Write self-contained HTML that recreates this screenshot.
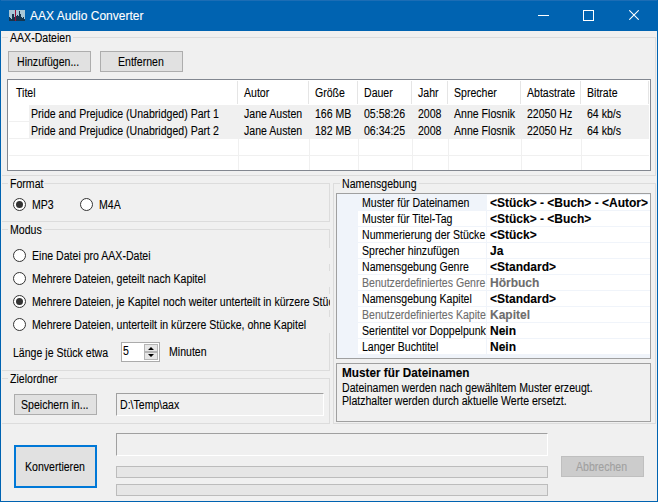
<!DOCTYPE html><html><head><meta charset="utf-8"><style>
html,body{margin:0;padding:0;width:658px;height:502px;overflow:hidden;background:#F0F0F0}
body>*,div>*{position:absolute}
div,svg,span{position:absolute}
.t{-webkit-text-stroke:0.1px currentColor;white-space:nowrap;font-family:"Liberation Sans",sans-serif;color:#000;transform-origin:0 0}
</style></head><body>
<div style="left:0px;top:0px;width:658px;height:31px;background:#0063B1"></div>
<div style="left:0px;top:0px;width:658px;height:1px;background:#1C6DB5"></div>
<div style="left:0px;top:0px;width:1px;height:502px;background:#0063B1"></div>
<div style="left:657px;top:0px;width:1px;height:502px;background:#0063B1"></div>
<div style="left:0px;top:501px;width:658px;height:1px;background:#0063B1"></div>
<svg style="left:9px;top:10px" width="16" height="11" viewBox="0 0 16 11"><rect width="16" height="11" fill="#A8C6D6"/><rect x="0" y="7" width="1" height="4" fill="#15354F"/><rect x="1" y="8" width="1" height="3" fill="#15354F"/><rect x="2" y="9" width="1" height="2" fill="#15354F"/><rect x="3" y="4" width="1" height="7" fill="#15354F"/><rect x="4" y="4" width="1" height="7" fill="#15354F"/><rect x="5" y="7" width="1" height="4" fill="#15354F"/><rect x="7" y="6" width="1" height="5" fill="#15354F"/><rect x="8" y="5" width="1" height="6" fill="#15354F"/><rect x="9" y="6" width="1" height="5" fill="#15354F"/><rect x="10" y="1" width="1" height="10" fill="#15354F"/><rect x="11" y="4" width="1" height="7" fill="#15354F"/><rect x="12" y="7" width="1" height="4" fill="#15354F"/><rect x="13" y="8" width="1" height="3" fill="#15354F"/><rect x="14" y="7" width="1" height="4" fill="#15354F"/><rect x="15" y="9" width="1" height="2" fill="#15354F"/><rect x="6" y="0" width="1" height="11" fill="#9A1038"/></svg>
<span class="t" style="left:30px;top:10px;font-size:12px;line-height:12px;transform:scaleX(1.0);color:#fff">AAX Audio Converter</span>
<div style="left:538px;top:15px;width:11px;height:1px;background:#fff"></div>
<div style="left:583px;top:10px;width:11px;height:11px;border:1px solid #fff;box-sizing:border-box"></div>
<svg style="left:629px;top:10px" width="10" height="10" viewBox="0 0 10 10"><path d="M0.3 0.3 L9.7 9.7 M9.7 0.3 L0.3 9.7" stroke="#fff" stroke-width="1.05"/></svg>
<div style="left:2px;top:37px;width:654px;height:1px;background:#DCDCDC"></div>
<div style="left:2px;top:175px;width:654px;height:1px;background:#DCDCDC"></div>
<div style="left:655px;top:37px;width:1px;height:139px;background:#DCDCDC"></div>
<div style="left:8px;top:36px;width:65px;height:3px;background:#F0F0F0"></div>
<span class="t" style="left:10px;top:32px;font-size:12px;line-height:12px;transform:scaleX(0.88);">AAX-Dateien</span>
<div style="left:8px;top:51px;width:83px;height:21px;background:#E1E1E1;border:1px solid #ADADAD;box-sizing:border-box"></div>
<span class="t" style="left:17px;top:56px;font-size:12px;line-height:12px;transform:scaleX(0.88);">Hinzufügen...</span>
<div style="left:100px;top:51px;width:83px;height:21px;background:#E1E1E1;border:1px solid #ADADAD;box-sizing:border-box"></div>
<span class="t" style="left:118px;top:56px;font-size:12px;line-height:12px;transform:scaleX(0.88);">Entfernen</span>
<div style="left:7px;top:79px;width:644px;height:92px;background:#fff;border:1px solid #828790;box-sizing:border-box"></div>
<div style="left:237px;top:81px;width:1px;height:23px;background:#E5E5E5"></div>
<div style="left:308px;top:81px;width:1px;height:23px;background:#E5E5E5"></div>
<div style="left:357px;top:81px;width:1px;height:23px;background:#E5E5E5"></div>
<div style="left:411px;top:81px;width:1px;height:23px;background:#E5E5E5"></div>
<div style="left:447px;top:81px;width:1px;height:23px;background:#E5E5E5"></div>
<div style="left:520px;top:81px;width:1px;height:23px;background:#E5E5E5"></div>
<div style="left:580px;top:81px;width:1px;height:23px;background:#E5E5E5"></div>
<div style="left:648px;top:81px;width:1px;height:23px;background:#E5E5E5"></div>
<span class="t" style="left:16px;top:87px;font-size:12px;line-height:12px;transform:scaleX(0.88);">Titel</span>
<span class="t" style="left:244px;top:87px;font-size:12px;line-height:12px;transform:scaleX(0.88);">Autor</span>
<span class="t" style="left:315px;top:87px;font-size:12px;line-height:12px;transform:scaleX(0.88);">Größe</span>
<span class="t" style="left:364px;top:87px;font-size:12px;line-height:12px;transform:scaleX(0.88);">Dauer</span>
<span class="t" style="left:418px;top:87px;font-size:12px;line-height:12px;transform:scaleX(0.88);">Jahr</span>
<span class="t" style="left:454px;top:87px;font-size:12px;line-height:12px;transform:scaleX(0.88);">Sprecher</span>
<span class="t" style="left:527px;top:87px;font-size:12px;line-height:12px;transform:scaleX(0.88);">Abtastrate</span>
<span class="t" style="left:587px;top:87px;font-size:12px;line-height:12px;transform:scaleX(0.88);">Bitrate</span>
<div style="left:29px;top:105px;width:620px;height:33px;background:#F0F0F0"></div>
<div style="left:9px;top:121px;width:640px;height:1px;background:#F0F0F0"></div>
<div style="left:9px;top:138px;width:640px;height:1px;background:#F0F0F0"></div>
<div style="left:9px;top:155px;width:640px;height:1px;background:#F0F0F0"></div>
<div style="left:238px;top:139px;width:1px;height:31px;background:#F0F0F0"></div>
<div style="left:309px;top:139px;width:1px;height:31px;background:#F0F0F0"></div>
<div style="left:358px;top:139px;width:1px;height:31px;background:#F0F0F0"></div>
<div style="left:412px;top:139px;width:1px;height:31px;background:#F0F0F0"></div>
<div style="left:448px;top:139px;width:1px;height:31px;background:#F0F0F0"></div>
<div style="left:521px;top:139px;width:1px;height:31px;background:#F0F0F0"></div>
<div style="left:581px;top:139px;width:1px;height:31px;background:#F0F0F0"></div>
<span class="t" style="left:31px;top:108px;font-size:12px;line-height:12px;transform:scaleX(0.88);">Pride and Prejudice (Unabridged) Part 1</span>
<span class="t" style="left:244px;top:108px;font-size:12px;line-height:12px;transform:scaleX(0.88);">Jane Austen</span>
<span class="t" style="left:315px;top:108px;font-size:12px;line-height:12px;transform:scaleX(0.88);">166 MB</span>
<span class="t" style="left:364px;top:108px;font-size:12px;line-height:12px;transform:scaleX(0.88);">05:58:26</span>
<span class="t" style="left:418px;top:108px;font-size:12px;line-height:12px;transform:scaleX(0.88);">2008</span>
<span class="t" style="left:454px;top:108px;font-size:12px;line-height:12px;transform:scaleX(0.88);">Anne Flosnik</span>
<span class="t" style="left:527px;top:108px;font-size:12px;line-height:12px;transform:scaleX(0.88);">22050 Hz</span>
<span class="t" style="left:587px;top:108px;font-size:12px;line-height:12px;transform:scaleX(0.88);">64 kb/s</span>
<span class="t" style="left:31px;top:125px;font-size:12px;line-height:12px;transform:scaleX(0.88);">Pride and Prejudice (Unabridged) Part 2</span>
<span class="t" style="left:244px;top:125px;font-size:12px;line-height:12px;transform:scaleX(0.88);">Jane Austen</span>
<span class="t" style="left:315px;top:125px;font-size:12px;line-height:12px;transform:scaleX(0.88);">182 MB</span>
<span class="t" style="left:364px;top:125px;font-size:12px;line-height:12px;transform:scaleX(0.88);">06:34:25</span>
<span class="t" style="left:418px;top:125px;font-size:12px;line-height:12px;transform:scaleX(0.88);">2008</span>
<span class="t" style="left:454px;top:125px;font-size:12px;line-height:12px;transform:scaleX(0.88);">Anne Flosnik</span>
<span class="t" style="left:527px;top:125px;font-size:12px;line-height:12px;transform:scaleX(0.88);">22050 Hz</span>
<span class="t" style="left:587px;top:125px;font-size:12px;line-height:12px;transform:scaleX(0.88);">64 kb/s</span>
<div style="left:2px;top:183px;width:328px;height:1px;background:#DCDCDC"></div>
<div style="left:2px;top:221px;width:328px;height:1px;background:#DCDCDC"></div>
<div style="left:329px;top:183px;width:1px;height:39px;background:#DCDCDC"></div>
<div style="left:8px;top:182px;width:36px;height:3px;background:#F0F0F0"></div>
<span class="t" style="left:10px;top:178px;font-size:12px;line-height:12px;transform:scaleX(0.88);">Format</span>
<svg style="left:13px;top:198px" width="13" height="13" viewBox="0 0 13 13"><circle cx="6.5" cy="6.5" r="6" fill="#fff" stroke="#333" stroke-width="1"/><circle cx="6.5" cy="6.5" r="3.5" fill="#333"/></svg>
<span class="t" style="left:32px;top:199px;font-size:12px;line-height:12px;transform:scaleX(0.88);">MP3</span>
<svg style="left:80px;top:198px" width="13" height="13" viewBox="0 0 13 13"><circle cx="6.5" cy="6.5" r="6" fill="#fff" stroke="#333" stroke-width="1"/></svg>
<span class="t" style="left:99px;top:199px;font-size:12px;line-height:12px;transform:scaleX(0.88);">M4A</span>
<div style="left:2px;top:229px;width:328px;height:1px;background:#DCDCDC"></div>
<div style="left:2px;top:370px;width:328px;height:1px;background:#DCDCDC"></div>
<div style="left:329px;top:229px;width:1px;height:142px;background:#DCDCDC"></div>
<div style="left:8px;top:228px;width:36px;height:3px;background:#F0F0F0"></div>
<span class="t" style="left:10px;top:224px;font-size:12px;line-height:12px;transform:scaleX(0.88);">Modus</span>
<div style="left:13px;top:248px;width:317px;height:16px;overflow:hidden;background:#F0F0F0">
<span class="t" style="left:19px;top:2px;font-size:12px;line-height:12px;transform:scaleX(0.88)">Eine Datei pro AAX-Datei</span></div>
<svg style="left:13px;top:249px" width="13" height="13" viewBox="0 0 13 13"><circle cx="6.5" cy="6.5" r="6" fill="#fff" stroke="#333" stroke-width="1"/></svg>
<div style="left:13px;top:271px;width:317px;height:16px;overflow:hidden;background:#F0F0F0">
<span class="t" style="left:19px;top:2px;font-size:12px;line-height:12px;transform:scaleX(0.88)">Mehrere Dateien, geteilt nach Kapitel</span></div>
<svg style="left:13px;top:272px" width="13" height="13" viewBox="0 0 13 13"><circle cx="6.5" cy="6.5" r="6" fill="#fff" stroke="#333" stroke-width="1"/></svg>
<div style="left:13px;top:294px;width:317px;height:16px;overflow:hidden;background:#F0F0F0">
<span class="t" style="left:19px;top:2px;font-size:12px;line-height:12px;transform:scaleX(0.88)">Mehrere Dateien, je Kapitel noch weiter unterteilt in kürzere Stücke</span></div>
<svg style="left:13px;top:295px" width="13" height="13" viewBox="0 0 13 13"><circle cx="6.5" cy="6.5" r="6" fill="#fff" stroke="#333" stroke-width="1"/><circle cx="6.5" cy="6.5" r="3.5" fill="#333"/></svg>
<div style="left:13px;top:317px;width:317px;height:16px;overflow:hidden;background:#F0F0F0">
<span class="t" style="left:19px;top:2px;font-size:12px;line-height:12px;transform:scaleX(0.88)">Mehrere Dateien, unterteilt in kürzere Stücke, ohne Kapitel</span></div>
<svg style="left:13px;top:318px" width="13" height="13" viewBox="0 0 13 13"><circle cx="6.5" cy="6.5" r="6" fill="#fff" stroke="#333" stroke-width="1"/></svg>
<span class="t" style="left:13px;top:347px;font-size:12px;line-height:12px;transform:scaleX(0.88);">Länge je Stück etwa</span>
<div style="left:121px;top:342px;width:39px;height:20px;background:#fff;border:1px solid #ABABAB;box-sizing:border-box"></div>
<span class="t" style="left:123px;top:345px;font-size:12px;line-height:12px;transform:scaleX(0.88);">5</span>
<div style="left:144px;top:344px;width:14px;height:8px;background:#E6E6E6;border:1px solid #B5B5B5;box-sizing:border-box"></div>
<div style="left:144px;top:352px;width:14px;height:8px;background:#E6E6E6;border:1px solid #B5B5B5;box-sizing:border-box"></div>
<svg style="left:147px;top:345px" width="8" height="14" viewBox="0 0 8 14"><path d="M1 5 L4 2 L7 5 Z M1 9 L7 9 L4 12 Z" fill="#000"/></svg>
<span class="t" style="left:169px;top:346px;font-size:12px;line-height:12px;transform:scaleX(0.88);">Minuten</span>
<div style="left:2px;top:378px;width:328px;height:1px;background:#DCDCDC"></div>
<div style="left:2px;top:423px;width:328px;height:1px;background:#DCDCDC"></div>
<div style="left:329px;top:378px;width:1px;height:46px;background:#DCDCDC"></div>
<div style="left:8px;top:377px;width:51px;height:3px;background:#F0F0F0"></div>
<span class="t" style="left:10px;top:373px;font-size:12px;line-height:12px;transform:scaleX(0.88);">Zielordner</span>
<div style="left:14px;top:394px;width:83px;height:21px;background:#E1E1E1;border:1px solid #ADADAD;box-sizing:border-box"></div>
<span class="t" style="left:21px;top:399px;font-size:12px;line-height:12px;transform:scaleX(0.88);">Speichern in...</span>
<div style="left:116px;top:393px;width:208px;height:23px;background:#F0F0F0;border-top:1px solid #A0A0A0;border-left:1px solid #A0A0A0;border-right:1px solid #FFFFFF;border-bottom:1px solid #FFFFFF;box-sizing:border-box"></div>
<span class="t" style="left:120px;top:399px;font-size:12px;line-height:12px;transform:scaleX(0.88);">D:\Temp\aax</span>
<div style="left:333px;top:183px;width:323px;height:1px;background:#DCDCDC"></div>
<div style="left:333px;top:423px;width:323px;height:1px;background:#DCDCDC"></div>
<div style="left:655px;top:183px;width:1px;height:241px;background:#DCDCDC"></div>
<div style="left:333px;top:183px;width:1px;height:241px;background:#DCDCDC"></div>
<div style="left:340px;top:182px;width:79px;height:3px;background:#F0F0F0"></div>
<span class="t" style="left:342px;top:178px;font-size:12px;line-height:12px;transform:scaleX(0.88);">Namensgebung</span>
<div style="left:336px;top:193px;width:315px;height:166px;background:#F0F4FA;border:1px solid #A0A0A0;box-sizing:border-box"></div>
<div style="left:487px;top:195px;width:163px;height:15px;background:#fff"></div>
<div style="left:362px;top:194px;width:124px;height:16px;overflow:hidden">
<span class="t" style="left:0;top:3px;font-size:12px;line-height:12px;transform:scaleX(0.88);">Muster für Dateinamen</span></div>
<div style="left:490px;top:194px;width:159px;height:16px;overflow:hidden">
<span class="t" style="left:0;top:3px;font-size:12px;line-height:12px;font-weight:bold;transform:scaleX(1.0);">&lt;Stück&gt; - &lt;Buch&gt; - &lt;Autor&gt;</span></div>
<div style="left:358px;top:211px;width:128px;height:15px;background:#fff"></div>
<div style="left:487px;top:211px;width:163px;height:15px;background:#fff"></div>
<div style="left:362px;top:210px;width:124px;height:16px;overflow:hidden">
<span class="t" style="left:0;top:3px;font-size:12px;line-height:12px;transform:scaleX(0.88);">Muster für Titel-Tag</span></div>
<div style="left:490px;top:210px;width:159px;height:16px;overflow:hidden">
<span class="t" style="left:0;top:3px;font-size:12px;line-height:12px;font-weight:bold;transform:scaleX(1.0);">&lt;Stück&gt; - &lt;Buch&gt;</span></div>
<div style="left:358px;top:227px;width:128px;height:15px;background:#fff"></div>
<div style="left:487px;top:227px;width:163px;height:15px;background:#fff"></div>
<div style="left:362px;top:226px;width:124px;height:16px;overflow:hidden">
<span class="t" style="left:0;top:3px;font-size:12px;line-height:12px;transform:scaleX(0.88);">Nummerierung der Stücke</span></div>
<div style="left:490px;top:226px;width:159px;height:16px;overflow:hidden">
<span class="t" style="left:0;top:3px;font-size:12px;line-height:12px;font-weight:bold;transform:scaleX(1.0);">&lt;Stück&gt;</span></div>
<div style="left:358px;top:243px;width:128px;height:15px;background:#fff"></div>
<div style="left:487px;top:243px;width:163px;height:15px;background:#fff"></div>
<div style="left:362px;top:242px;width:124px;height:16px;overflow:hidden">
<span class="t" style="left:0;top:3px;font-size:12px;line-height:12px;transform:scaleX(0.88);">Sprecher hinzufügen</span></div>
<div style="left:490px;top:242px;width:159px;height:16px;overflow:hidden">
<span class="t" style="left:0;top:3px;font-size:12px;line-height:12px;font-weight:bold;transform:scaleX(1.0);">Ja</span></div>
<div style="left:358px;top:259px;width:128px;height:15px;background:#fff"></div>
<div style="left:487px;top:259px;width:163px;height:15px;background:#fff"></div>
<div style="left:362px;top:258px;width:124px;height:16px;overflow:hidden">
<span class="t" style="left:0;top:3px;font-size:12px;line-height:12px;transform:scaleX(0.88);">Namensgebung Genre</span></div>
<div style="left:490px;top:258px;width:159px;height:16px;overflow:hidden">
<span class="t" style="left:0;top:3px;font-size:12px;line-height:12px;font-weight:bold;transform:scaleX(1.0);">&lt;Standard&gt;</span></div>
<div style="left:358px;top:275px;width:128px;height:15px;background:#fff"></div>
<div style="left:487px;top:275px;width:163px;height:15px;background:#fff"></div>
<div style="left:362px;top:274px;width:124px;height:16px;overflow:hidden">
<span class="t" style="left:0;top:3px;font-size:12px;line-height:12px;transform:scaleX(0.88);color:#6D6D6D">Benutzerdefiniertes Genre</span></div>
<div style="left:490px;top:274px;width:159px;height:16px;overflow:hidden">
<span class="t" style="left:0;top:3px;font-size:12px;line-height:12px;font-weight:bold;transform:scaleX(1.0);color:#6D6D6D">Hörbuch</span></div>
<div style="left:358px;top:291px;width:128px;height:15px;background:#fff"></div>
<div style="left:487px;top:291px;width:163px;height:15px;background:#fff"></div>
<div style="left:362px;top:290px;width:124px;height:16px;overflow:hidden">
<span class="t" style="left:0;top:3px;font-size:12px;line-height:12px;transform:scaleX(0.88);">Namensgebung Kapitel</span></div>
<div style="left:490px;top:290px;width:159px;height:16px;overflow:hidden">
<span class="t" style="left:0;top:3px;font-size:12px;line-height:12px;font-weight:bold;transform:scaleX(1.0);">&lt;Standard&gt;</span></div>
<div style="left:358px;top:307px;width:128px;height:15px;background:#fff"></div>
<div style="left:487px;top:307px;width:163px;height:15px;background:#fff"></div>
<div style="left:362px;top:306px;width:124px;height:16px;overflow:hidden">
<span class="t" style="left:0;top:3px;font-size:12px;line-height:12px;transform:scaleX(0.88);color:#6D6D6D">Benutzerdefiniertes Kapitel</span></div>
<div style="left:490px;top:306px;width:159px;height:16px;overflow:hidden">
<span class="t" style="left:0;top:3px;font-size:12px;line-height:12px;font-weight:bold;transform:scaleX(1.0);color:#6D6D6D">Kapitel</span></div>
<div style="left:358px;top:323px;width:128px;height:15px;background:#fff"></div>
<div style="left:487px;top:323px;width:163px;height:15px;background:#fff"></div>
<div style="left:362px;top:322px;width:124px;height:16px;overflow:hidden">
<span class="t" style="left:0;top:3px;font-size:12px;line-height:12px;transform:scaleX(0.88);">Serientitel vor Doppelpunkt</span></div>
<div style="left:490px;top:322px;width:159px;height:16px;overflow:hidden">
<span class="t" style="left:0;top:3px;font-size:12px;line-height:12px;font-weight:bold;transform:scaleX(1.0);">Nein</span></div>
<div style="left:358px;top:339px;width:128px;height:15px;background:#fff"></div>
<div style="left:487px;top:339px;width:163px;height:15px;background:#fff"></div>
<div style="left:362px;top:338px;width:124px;height:16px;overflow:hidden">
<span class="t" style="left:0;top:3px;font-size:12px;line-height:12px;transform:scaleX(0.88);">Langer Buchtitel</span></div>
<div style="left:490px;top:338px;width:159px;height:16px;overflow:hidden">
<span class="t" style="left:0;top:3px;font-size:12px;line-height:12px;font-weight:bold;transform:scaleX(1.0);">Nein</span></div>
<div style="left:336px;top:363px;width:315px;height:59px;background:#F0F0F0;border:1px solid #A0A0A0;box-sizing:border-box"></div>
<span class="t" style="left:342px;top:367px;font-size:12px;line-height:12px;transform:scaleX(0.98);font-weight:bold">Muster für Dateinamen</span>
<span class="t" style="left:342px;top:382px;font-size:12px;line-height:12px;transform:scaleX(0.88);">Dateinamen werden nach gewähltem Muster erzeugt.</span>
<span class="t" style="left:342px;top:395px;font-size:12px;line-height:12px;transform:scaleX(0.88);">Platzhalter werden durch aktuelle Werte ersetzt.</span>
<div style="left:14px;top:445px;width:83px;height:43px;background:#E1E1E1;border:2px solid #0078D7;box-sizing:border-box"></div>
<span class="t" style="left:25px;top:461px;font-size:12px;line-height:12px;transform:scaleX(0.88);">Konvertieren</span>
<div style="left:116px;top:433px;width:432px;height:23px;background:#F0F0F0;border-top:1px solid #A0A0A0;border-left:1px solid #A0A0A0;border-right:1px solid #FFFFFF;border-bottom:1px solid #FFFFFF;box-sizing:border-box"></div>
<div style="left:116px;top:466px;width:432px;height:12px;background:#E6E6E6;border:1px solid #BCBCBC;box-sizing:border-box"></div>
<div style="left:116px;top:484px;width:432px;height:12px;background:#E6E6E6;border:1px solid #BCBCBC;box-sizing:border-box"></div>
<div style="left:561px;top:456px;width:83px;height:21px;background:#CCCCCC;border:1px solid #BFBFBF;box-sizing:border-box"></div>
<span class="t" style="left:576px;top:461px;font-size:12px;line-height:12px;transform:scaleX(0.88);color:#A0A0A0">Abbrechen</span>
</body></html>
